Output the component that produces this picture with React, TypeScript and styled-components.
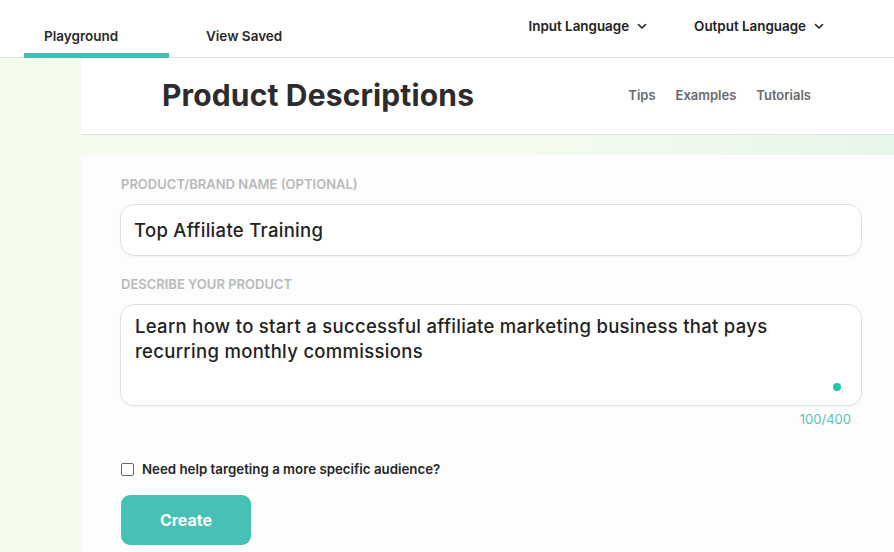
import React from "react";
import styled, { createGlobalStyle } from "styled-components";

const GlobalStyle = createGlobalStyle`
    html, body {
        margin: 0;
        padding: 0;
    }
    body {
        font-family: Inter, "Noto Sans", sans-serif;
        color: #2a2a2a;
        background: linear-gradient(100deg, #f5fcee 0%, #f5fcee 55%, #e2f6e9 100%);
        min-height: 552px;
        overflow: hidden;
    }
`;

const TopBar = styled.header`
    height: 57px;
    display: flex;
    align-items: stretch;
    background: #fff;
    border-bottom: 1px solid #e3e3e3;
`;

const Tabs = styled.nav`
    display: flex;
    align-items: stretch;
    padding-left: 24px;
`;

const Tab = styled.div<{ $active?: boolean }>`
    width: ${(p) => (p.$active ? "145px" : "auto")};
    box-sizing: border-box;
    padding: 28px 0 0 ${(p) => (p.$active ? "20px" : "37px")};
    font-size: 13.5px;
    font-weight: 600;
    color: #2a2a2a;
    border-bottom: 5px solid ${(p) => (p.$active ? "#45bfb5" : "transparent")};
    margin-bottom: -1px;
`;

const LangGroup = styled.div`
    margin-left: auto;
    display: flex;
    gap: 46px;
    padding: 18px 69px 0 0;
`;

const LangSelect = styled.div`
    display: flex;
    align-items: flex-start;
    gap: 7px;
    font-size: 13.4px;
    font-weight: 600;
    color: #222;
    svg {
        margin-top: 2px;
    }
`;

const Body = styled.div`
    display: flex;
    height: 494px;
`;

const Side = styled.aside`
    width: 81px;
    flex-shrink: 0;
`;

const Column = styled.div`
    flex: 1;
    display: flex;
    flex-direction: column;
    gap: 20px;
`;

const HeaderPanel = styled.div`
    box-sizing: border-box;
    height: 77px;
    background: #fff;
    border-bottom: 1px solid #e3e3e3;
    display: flex;
    align-items: center;
    padding: 0 83px 3px 81px;
`;

const Title = styled.h1`
    margin: 0;
    font-size: 30px;
    font-weight: 700;
    color: #2c2c2c;
    letter-spacing: 0.15px;
`;

const Links = styled.div`
    margin-left: auto;
    display: flex;
    gap: 20px;
    font-size: 13px;
    font-weight: 600;
    color: #6a6a6a;
`;

const MainPanel = styled.main`
    flex: 1;
    background: #fdfdfd;
    padding: 23px 32px 0 39px;
`;

const Label = styled.div`
    font-size: 13px;
    font-weight: 600;
    color: #b9b9b9;
    text-transform: uppercase;
    margin: -2px 0 12px 1px;
`;

const Field = styled.div<{ $tall?: boolean }>`
    position: relative;
    box-sizing: border-box;
    height: ${(p) => (p.$tall ? "102px" : "52px")};
    border: 1px solid #e0e0e0;
    border-radius: 14px;
    background: #fff;
    box-shadow: 0 1px 2px rgba(0, 0, 0, 0.04);
    padding: ${(p) => (p.$tall ? "9px 14px" : "0 13px")};
    display: flex;
    align-items: ${(p) => (p.$tall ? "flex-start" : "center")};
    font-size: 18.5px;
    font-weight: 500;
    letter-spacing: 0.3px;
    line-height: 25px;
    color: #232323;
    margin-bottom: ${(p) => (p.$tall ? "5px" : "22px")};
`;

const Dot = styled.span`
    position: absolute;
    right: 20px;
    bottom: 14px;
    width: 8px;
    height: 8px;
    border-radius: 50%;
    background: #1fc8a1;
`;

const Counter = styled.div`
    text-align: right;
    font-size: 13px;
    color: #5cc0bd;
    padding-right: 11px;
    margin-bottom: 34px;
`;

const CheckRow = styled.label`
    display: flex;
    align-items: center;
    gap: 8px;
    font-size: 13.3px;
    font-weight: 600;
    color: #262626;
    margin: 0 0 18px 1px;
`;

const Box = styled.span`
    width: 11px;
    height: 11px;
    border: 1px solid #666;
    border-radius: 2px;
    background: #fff;
`;

const CreateButton = styled.button`
    width: 130px;
    height: 50px;
    margin-left: 1px;
    border: none;
    border-radius: 9px;
    background: #47c0b6;
    color: #fff;
    font-family: inherit;
    font-size: 16px;
    font-weight: 700;
`;

const Chevron = () => (
    <svg width="12" height="12" viewBox="0 0 12 12" fill="none">
        <path d="M2.5 4.5 6 8l3.5-3.5" stroke="#222" strokeWidth="1.6" strokeLinecap="round" strokeLinejoin="round" />
    </svg>
);

const App: React.FC = () => (
    <>
        <GlobalStyle />
        <TopBar>
            <Tabs>
                <Tab $active>Playground</Tab>
                <Tab>View Saved</Tab>
            </Tabs>
            <LangGroup>
                <LangSelect>
                    Input Language <Chevron />
                </LangSelect>
                <LangSelect>
                    Output Language <Chevron />
                </LangSelect>
            </LangGroup>
        </TopBar>
        <Body>
            <Side />
            <Column>
                <HeaderPanel>
                    <Title>Product Descriptions</Title>
                    <Links>
                        <span>Tips</span>
                        <span>Examples</span>
                        <span>Tutorials</span>
                    </Links>
                </HeaderPanel>
                <MainPanel>
                    <Label>Product/Brand Name (Optional)</Label>
                    <Field>Top Affiliate Training</Field>
                    <Label>Describe Your Product</Label>
                    <Field $tall>
                        Learn how to start a successful affiliate marketing business that pays recurring monthly commissions
                        <Dot />
                    </Field>
                    <Counter>100/400</Counter>
                    <CheckRow>
                        <Box />
                        Need help targeting a more specific audience?
                    </CheckRow>
                    <CreateButton>Create</CreateButton>
                </MainPanel>
            </Column>
        </Body>
    </>
);

export default App;
